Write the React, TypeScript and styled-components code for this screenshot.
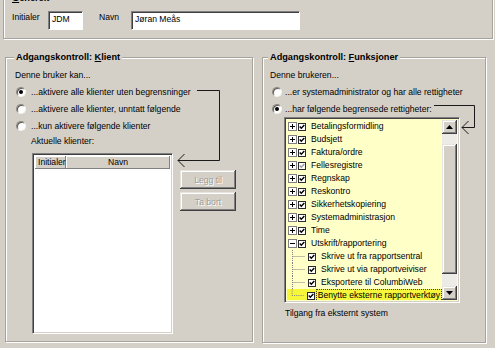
import styled, { createGlobalStyle } from "styled-components";

type FuncNode = { name: string; grey?: boolean; children?: string[] };

const functions: FuncNode[] = [
  { name: "Betalingsformidling" },
  { name: "Budsjett" },
  { name: "Faktura/ordre" },
  { name: "Fellesregistre", grey: true },
  { name: "Regnskap" },
  { name: "Reskontro" },
  { name: "Sikkerhetskopiering" },
  { name: "Systemadministrasjon" },
  { name: "Time" },
  {
    name: "Utskrift/rapportering",
    children: [
      "Skrive ut fra rapportsentral",
      "Skrive ut via rapportveiviser",
      "Eksportere til ColumbiWeb",
      "Benytte eksterne rapportverktøy",
    ],
  },
];

function Expander({ open }: { open?: boolean }) {
  return (
    <svg width="9" height="9" viewBox="0 0 9 9">
      <rect x="0.5" y="0.5" width="8" height="8" fill="#fff" stroke="#808080" />
      <path d="M2 4.5h5" stroke="#000" />
      {!open && <path d="M4.5 2v5" stroke="#000" />}
    </svg>
  );
}

function TreeCheck({ grey }: { grey?: boolean }) {
  return (
    <svg width="8" height="8" viewBox="0 0 8 8">
      <rect x="0.5" y="0.5" width="7" height="7" fill="#fff" stroke="#2a2a2a" />
      <path
        d="M1.7 3.6l1.6 1.7 3-3.3"
        fill="none"
        stroke={grey ? "#9c9c9c" : "#000"}
        strokeWidth="1.4"
      />
    </svg>
  );
}

function Connector({ last }: { last?: boolean }) {
  return (
    <svg width="19" height="13" viewBox="0 0 19 13">
      <path
        d={`M5.5 0V${last ? 6.5 : 13}M5.5 6.5H18`}
        stroke="#808080"
        strokeDasharray="1 1"
        fill="none"
      />
    </svg>
  );
}

function ScrollArrow({ down }: { down?: boolean }) {
  return (
    <svg width="7" height="4" viewBox="0 0 7 4">
      <polygon points={down ? "0,0 7,0 3.5,4" : "3.5,0 7,4 0,4"} fill="#000" />
    </svg>
  );
}

const GlobalStyle = createGlobalStyle`
  html, body {
    margin: 0;
    padding: 0;
  }
  body {
    background: #d4d0c8;
    font-family: "Liberation Sans", Arial, sans-serif;
    font-size: 8.6px;
    color: #000;
  }
`;

const Window = styled.div`
  width: 495px;
  height: 348px;
  overflow: hidden;
  background: #d4d0c8;
`;

const Group = styled.div<{ $w: number; $h: number }>`
  position: relative;
  box-sizing: border-box;
  flex: none;
  width: ${(p) => p.$w}px;
  height: ${(p) => p.$h}px;
  border: 1px solid #a6a39c;
  box-shadow: inset 1px 1px #fff, 1px 1px #fff;
`;

const TopGroup = styled(Group)`
  margin: -2px 0 0 3px;
`;

const Legend = styled.span<{ $left: number }>`
  position: absolute;
  top: -7px;
  left: ${(p) => p.$left}px;
  padding: 0 2px;
  background: #d4d0c8;
  font-size: 9.2px;
  font-weight: bold;
  line-height: 13px;
  white-space: nowrap;
  u {
    text-decoration: underline;
  }
`;

const FieldRow = styled.div`
  display: flex;
  align-items: flex-start;
  padding: 12px 0 0 8px;
`;

const FieldLabel = styled.span<{ $w: number }>`
  width: ${(p) => p.$w}px;
  line-height: 13px;
  white-space: nowrap;
`;

const TextBox = styled.div<{ $w: number; $gap?: number }>`
  box-sizing: border-box;
  width: ${(p) => p.$w}px;
  height: 19px;
  margin-right: ${(p) => p.$gap ?? 0}px;
  padding: 2px 3px 0;
  background: #fff;
  border: 1px solid;
  border-color: #808080 #fff #fff #808080;
  box-shadow: inset 1px 1px #404040;
  line-height: 11px;
  white-space: nowrap;
`;

const Lower = styled.div`
  display: flex;
  gap: 9px;
  margin-top: 18px;
  padding-left: 5px;
`;

const GroupBody = styled.div<{ $pl: number }>`
  display: flex;
  flex-direction: column;
  align-items: flex-start;
  padding: 11px 0 0 ${(p) => p.$pl}px;
`;

const Caption = styled.div<{ $ml?: number; $mt?: number }>`
  margin: ${(p) => p.$mt ?? 0}px 0 0 ${(p) => p.$ml ?? 0}px;
  line-height: 12px;
  white-space: nowrap;
`;

const RadioList = styled.div<{ $ml: number }>`
  display: flex;
  flex-direction: column;
  gap: 1px;
  margin: 3px 0 0 ${(p) => p.$ml}px;
`;

const RadioRow = styled.div<{ $gap: number }>`
  display: flex;
  align-items: center;
  gap: ${(p) => p.$gap}px;
  height: 16px;
  white-space: nowrap;
`;

const Radio = styled.span<{ $checked?: boolean }>`
  position: relative;
  box-sizing: border-box;
  flex: none;
  width: 10px;
  height: 10px;
  border-radius: 50%;
  background: #fff;
  border: 1px solid;
  border-color: #8a8780 #f4f3f0 #f4f3f0 #8a8780;
  box-shadow: inset 1px 1px #5a5852;
  &::after {
    content: "";
    display: ${(p) => (p.$checked ? "block" : "none")};
    position: absolute;
    left: 2px;
    top: 2px;
    width: 4px;
    height: 4px;
    border-radius: 50%;
    background: #000;
  }
`;

const ClientArea = styled.div`
  display: flex;
  gap: 7px;
  margin: 6px 0 0 17px;
`;

const Sunken = styled.div`
  box-sizing: border-box;
  background: #fff;
  border: 1px solid;
  border-color: #808080 #fff #fff #808080;
  box-shadow: inset 1px 1px #404040, inset -1px -1px #d4d0c8;
`;

const ListBox = styled(Sunken)`
  width: 141px;
  height: 181px;
  padding: 2px;
`;

const ListHeader = styled.div`
  display: flex;
  height: 13px;
`;

const HeaderCell = styled.div<{ $w?: number }>`
  box-sizing: border-box;
  ${(p) => (p.$w ? `width: ${p.$w}px; padding-left: 3px;` : "flex: 1; text-align: center;")}
  overflow: hidden;
  background: #d4d0c8;
  line-height: 13px;
  white-space: nowrap;
  box-shadow: inset -1px -1px #808080, inset 1px 1px #fff;
`;

const ButtonColumn = styled.div`
  display: flex;
  flex-direction: column;
  gap: 3px;
  padding-top: 17px;
`;

const Button = styled.button`
  box-sizing: border-box;
  width: 56px;
  height: 19px;
  padding: 0;
  border: none;
  background: #d4d0c8;
  font: inherit;
  color: #a19e97;
  text-shadow: 1px 1px #fff;
  box-shadow: inset -1px -1px #404040, inset 1px 1px #e6e4df, inset -2px -2px #808080,
    inset 2px 2px #fff;
`;

const Tree = styled(Sunken)`
  display: flex;
  width: 176px;
  height: 186px;
  margin: 0 0 0 14px;
  padding: 2px;
  background: #ffffc8;
`;

const TreeRows = styled.div`
  flex: 1;
  min-width: 0;
  overflow: hidden;
`;

const TreeRow = styled.div<{ $selected?: boolean }>`
  display: flex;
  align-items: center;
  height: 13px;
  white-space: nowrap;
  background: ${(p) => (p.$selected ? "#f6f63a" : "transparent")};
`;

const TopExpander = styled.span`
  display: flex;
  margin: 0 1px 0 1px;
`;

const ChildCheck = styled.span`
  display: flex;
  margin-left: 2px;
`;

const ItemLabel = styled.span<{ $focus?: boolean }>`
  margin-left: ${(p) => (p.$focus ? 1 : 3)}px;
  padding: 0 1px;
  line-height: 11px;
  border: 1px dotted ${(p) => (p.$focus ? "#3c3c20" : "transparent")};
`;

const ScrollBar = styled.div`
  display: flex;
  flex-direction: column;
  width: 15px;
  flex: none;
  background: #ecebe6;
`;

const ScrollButton = styled.div`
  display: flex;
  align-items: center;
  justify-content: center;
  height: 14px;
  background: #d4d0c8;
  box-shadow: inset -1px -1px #404040, inset 1px 1px #e6e4df, inset -2px -2px #808080,
    inset 2px 2px #fff;
`;

const Track = styled.div<{ $h: number }>`
  height: ${(p) => p.$h}px;
`;

const Thumb = styled(ScrollButton)`
  height: 132px;
`;

const Arrows = styled.svg`
  position: absolute;
  left: 0;
  top: 0;
  pointer-events: none;
`;

export default function App() {
  return (
    <Window>
      <GlobalStyle />
      <TopGroup $w={490} $h={41}>
        <Legend $left={6}>
          <u>G</u>enerelt
        </Legend>
        <FieldRow>
          <FieldLabel $w={36}>Initialer</FieldLabel>
          <TextBox $w={35} $gap={16}>
            JDM
          </TextBox>
          <FieldLabel $w={32}>Navn</FieldLabel>
          <TextBox $w={169}>Jøran Meås</TextBox>
        </FieldRow>
      </TopGroup>

      <Lower>
        <Group $w={248} $h={285}>
          <Legend $left={8}>
            Adgangskontroll: <u>K</u>lient
          </Legend>
          <Arrows width="246" height="283">
            <path d="M191 32.5H213.5V102.5H172" fill="none" stroke="#1a1a1a" />
            <path d="M178.5 96L172 102.5L178.5 109" fill="none" stroke="#1a1a1a" />
          </Arrows>
          <GroupBody $pl={9}>
            <Caption>Denne bruker kan...</Caption>
            <RadioList $ml={1}>
              <RadioRow $gap={5}>
                <Radio $checked />
                ...aktivere alle klienter uten begrensninger
              </RadioRow>
              <RadioRow $gap={5}>
                <Radio />
                ...aktivere alle klienter, unntatt følgende
              </RadioRow>
              <RadioRow $gap={5}>
                <Radio />
                ...kun aktivere følgende klienter
              </RadioRow>
            </RadioList>
            <Caption $ml={16} $mt={1}>
              Aktuelle klienter:
            </Caption>
            <ClientArea>
              <ListBox>
                <ListHeader>
                  <HeaderCell $w={31}>Initialer</HeaderCell>
                  <HeaderCell>Navn</HeaderCell>
                </ListHeader>
              </ListBox>
              <ButtonColumn>
                <Button disabled>Legg til</Button>
                <Button disabled>Ta bort</Button>
              </ButtonColumn>
            </ClientArea>
          </GroupBody>
        </Group>

        <Group $w={224} $h={286}>
          <Legend $left={5}>
            Adgangskontroll: <u>F</u>unksjoner
          </Legend>
          <Arrows width="222" height="284">
            <path d="M171 47.5H211.5V69.5H199" fill="none" stroke="#1a1a1a" />
            <path d="M205.5 63L199 69.5L205.5 76" fill="none" stroke="#1a1a1a" />
          </Arrows>
          <GroupBody $pl={7}>
            <Caption>Denne brukeren...</Caption>
            <RadioList $ml={2}>
              <RadioRow $gap={3}>
                <Radio />
                ...er systemadministrator og har alle rettigheter
              </RadioRow>
              <RadioRow $gap={3}>
                <Radio $checked />
                ...har følgende begrensede rettigheter:
              </RadioRow>
            </RadioList>
            <Tree>
              <TreeRows>
                {functions.map((f) => (
                  <div key={f.name}>
                    <TreeRow>
                      <TopExpander>
                        <Expander open={!!f.children} />
                      </TopExpander>
                      <TreeCheck grey={f.grey} />
                      <ItemLabel>{f.name}</ItemLabel>
                    </TreeRow>
                    {f.children?.map((c, i, arr) => {
                      const last = i === arr.length - 1;
                      return (
                        <TreeRow key={c} $selected={last}>
                          <Connector last={last} />
                          <ChildCheck>
                            <TreeCheck />
                          </ChildCheck>
                          <ItemLabel $focus={last}>{c}</ItemLabel>
                        </TreeRow>
                      );
                    })}
                  </div>
                ))}
              </TreeRows>
              <ScrollBar>
                <ScrollButton>
                  <ScrollArrow />
                </ScrollButton>
                <Track $h={10} />
                <Thumb />
                <Track $h={12} />
                <ScrollButton>
                  <ScrollArrow down />
                </ScrollButton>
              </ScrollBar>
            </Tree>
            <Caption $ml={15} $mt={4}>
              Tilgang fra eksternt system
            </Caption>
          </GroupBody>
        </Group>
      </Lower>
    </Window>
  );
}
